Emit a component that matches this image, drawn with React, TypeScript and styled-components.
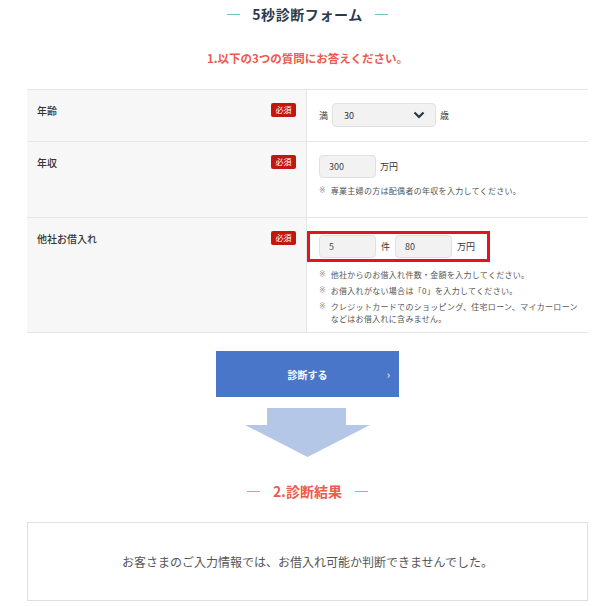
import * as React from "react";
import styled, { createGlobalStyle } from "styled-components";

const GlobalStyle = createGlobalStyle`
  body {
    margin: 0;
    background: #fff;
    font-family: "Noto Sans CJK JP", "Noto Sans", sans-serif;
    color: #333;
  }
`;

const notes2 = ["専業主婦の方は配偶者の年収を入力してください。"];
const notes3 = [
  "他社からのお借入れ件数・金額を入力してください。",
  "お借入れがない場合は「0」を入力してください。",
  "クレジットカードでのショッピング、住宅ローン、マイカーローン\nなどはお借入れに含みません。",
];

const NoteList = ({ items }: { items: string[] }) => (
  <Notes>
    {items.map((t) => (
      <Note key={t}>
        <Mark>※</Mark>
        <NoteText>{t}</NoteText>
      </Note>
    ))}
  </Notes>
);

const App = () => {
  return (
    <>
      <GlobalStyle />
      <Page>
        <Heading>
          <Line />
          <span>5秒診断フォーム</span>
          <Line />
        </Heading>
        <Lead>1.以下の3つの質問にお答えください。</Lead>

        <Table>
          <Row $height={52}>
            <LabelCell>
              <Label>年齢</Label>
              <Badge>必須</Badge>
            </LabelCell>
            <FieldCell>
              <Inline>
                <Unit>満</Unit>
                <Select>
                  <span>30</span>
                  <svg width="12" height="8" viewBox="0 0 12 8">
                    <path d="M1.5 1.5 L6 6 L10.5 1.5" fill="none" stroke="#2b3640" strokeWidth="2.2" />
                  </svg>
                </Select>
                <Unit>歳</Unit>
              </Inline>
            </FieldCell>
          </Row>

          <Row $height={76}>
            <LabelCell>
              <Label>年収</Label>
              <Badge>必須</Badge>
            </LabelCell>
            <FieldCell>
              <Inline>
                <Input $width={57}>300</Input>
                <Unit>万円</Unit>
              </Inline>
              <NoteList items={notes2} />
            </FieldCell>
          </Row>

          <Row $height={115}>
            <LabelCell>
              <Label>他社お借入れ</Label>
              <Badge>必須</Badge>
            </LabelCell>
            <FieldCell>
              <Highlight>
                <Input $width={57}>5</Input>
                <Unit>件</Unit>
                <Input $width={57}>80</Input>
                <Unit>万円</Unit>
              </Highlight>
              <NoteList items={notes3} />
            </FieldCell>
          </Row>
        </Table>

        <SubmitButton>
          <span>診断する</span>
          <Chevron>›</Chevron>
        </SubmitButton>

        <ArrowWrap>
          <svg width="126" height="50" viewBox="0 0 126 50">
            <polygon points="22,0 101,0 101,17 125,17 62.5,49 0,17 22,17" fill="#b4c7e7" />
          </svg>
        </ArrowWrap>

        <ResultHeading>
          <Line />
          <span>2.診断結果</span>
          <Line />
        </ResultHeading>

        <ResultBox>お客さまのご入力情報では、お借入れ可能か判断できませんでした。</ResultBox>
      </Page>
    </>
  );
};

export default App;

const Page = styled.div`
  width: 561px;
  margin-left: 27px;
  padding-bottom: 6px;
  display: flex;
  flex-direction: column;
  align-items: center;
`;

const Heading = styled.h2`
  margin: 2px 0 0;
  height: 24px;
  display: flex;
  align-items: center;
  gap: 12px;
  font-size: 14px;
  font-weight: 700;
  color: #2c3a4b;
  letter-spacing: 0.6px;
`;

const Line = styled.i`
  display: block;
  width: 13px;
  height: 1px;
  background: #6cc7c1;
`;

const Lead = styled.p`
  margin: 23px 0 0;
  font-size: 11.5px;
  font-weight: 700;
  color: #ec5a50;
  line-height: 18px;
`;

const Table = styled.div`
  width: 100%;
  margin-top: 22px;
  border-top: 1px solid #e6e6e6;
`;

const Row = styled.div<{ $height: number }>`
  display: grid;
  grid-template-columns: 280px 1fr;
  height: ${(p) => p.$height}px;
  box-sizing: border-box;
  border-bottom: 1px solid #e6e6e6;
`;

const LabelCell = styled.div`
  background: #f7f7f7;
  border-right: 1px solid #e6e6e6;
  display: flex;
  align-items: flex-start;
  justify-content: space-between;
  padding: 13px 10px 0 10px;
`;

const Label = styled.span`
  font-size: 10px;
  font-weight: 500;
  color: #333;
  line-height: 16px;
`;

const Badge = styled.span`
  background: #c1170e;
  color: #fff;
  font-size: 8px;
  line-height: 14px;
  border-radius: 2px;
  width: 25px;
  text-align: center;
`;

const FieldCell = styled.div`
  padding: 13px 0 0 12px;
  display: flex;
  flex-direction: column;
  align-items: flex-start;
`;

const Inline = styled.div`
  display: flex;
  align-items: center;
  gap: 4px;
`;

const Unit = styled.span`
  font-size: 9px;
  color: #333;
`;

const Select = styled.div`
  width: 104px;
  height: 24px;
  box-sizing: border-box;
  background: #f2f2f2;
  border: 1px solid #e0e0e0;
  border-radius: 4px;
  display: flex;
  align-items: center;
  justify-content: space-between;
  padding: 0 10px 0 11px;
  font-size: 9px;
  color: #333;
`;

const Input = styled.div<{ $width: number }>`
  width: ${(p) => p.$width}px;
  height: 23px;
  box-sizing: border-box;
  background: #f2f2f2;
  border: 1px solid #e0e0e0;
  border-radius: 4px;
  display: flex;
  align-items: center;
  padding-left: 9px;
  font-size: 9px;
  color: #444;
`;

const Highlight = styled.div`
  display: flex;
  align-items: center;
  gap: 5px;
  margin-left: -12px;
  width: 183px;
  height: 31px;
  box-sizing: border-box;
  border: 3px solid #e3141e;
  padding-left: 9px;
`;

const Notes = styled.div`
  margin-top: 7px;
  display: flex;
  flex-direction: column;
  gap: 4px;
`;

const Note = styled.div`
  display: flex;
  gap: 5px;
  font-size: 8px;
  line-height: 12px;
  color: #555;
`;

const Mark = styled.span`
  flex: none;
  color: #999;
  font-family: "DejaVu Sans", sans-serif;
  font-variant-emoji: text;
`;

const NoteText = styled.span`
  letter-spacing: 0.3px;
  white-space: pre-line;
`;

const SubmitButton = styled.button`
  margin-top: 18px;
  width: 183px;
  height: 46px;
  border: none;
  background: #4a76c9;
  color: #fff;
  font-family: inherit;
  font-size: 10px;
  font-weight: 700;
  position: relative;
  display: flex;
  align-items: center;
  justify-content: center;
`;

const Chevron = styled.span`
  position: absolute;
  right: 9px;
  top: 50%;
  transform: translateY(-52%);
  font-size: 11px;
  font-weight: 400;
`;

const ArrowWrap = styled.div`
  margin-top: 11px;
  height: 50px;
  display: flex;
`;

const ResultHeading = styled.h3`
  margin: 24px 0 0;
  display: flex;
  align-items: center;
  gap: 13px;
  font-size: 14px;
  font-weight: 700;
  color: #ec5a50;
  height: 18px;
`;

const ResultBox = styled.div`
  margin-top: 22px;
  width: 100%;
  height: 79px;
  box-sizing: border-box;
  border: 1px solid #e0e0e0;
  display: flex;
  align-items: center;
  justify-content: center;
  font-size: 12px;
  color: #555;
`;
